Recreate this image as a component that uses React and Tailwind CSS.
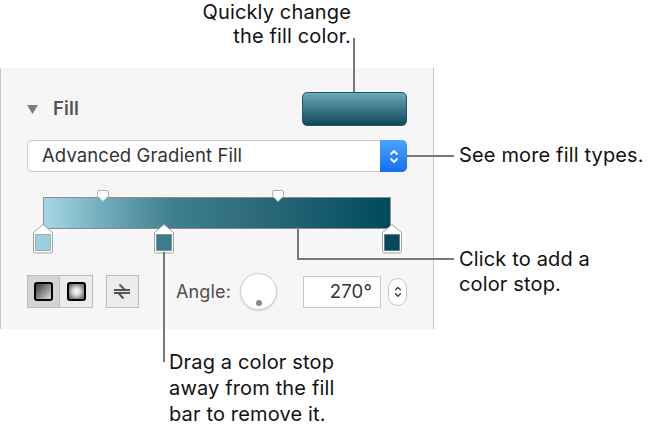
const font = { fontFamily: "Inter, 'Liberation Sans', sans-serif" };

const Stop = ({ color, left }) => (
  <svg
    width="20"
    height="30"
    viewBox="0 0 20 30"
    className="absolute top-[26px]"
    style={{ left }}
  >
    <path
      d="M10 0.5 L19.5 8.5 V27 a2 2 0 0 1 -2 2 H2.5 a2 2 0 0 1 -2 -2 V8.5 Z"
      fill="#fff"
      stroke="#a3a3a3"
    />
    <rect x="2.5" y="10.5" width="15" height="16" fill={color} stroke="rgba(0,0,0,0.25)" />
  </svg>
);

const Handle = ({ left }) => (
  <svg
    width="12"
    height="12"
    viewBox="0 0 12 12"
    className="absolute top-[-8px]"
    style={{ left }}
  >
    <path d="M2 0.5 H10 a1.5 1.5 0 0 1 1.5 1.5 V6 L6 11.5 L0.5 6 V2 a1.5 1.5 0 0 1 1.5 -1.5 Z" fill="#fff" stroke="#b0b0b0" />
  </svg>
);

const Chevrons = ({ color, size = 10 }) => (
  <svg width={size} height={size * 1.7} viewBox="0 0 10 17" fill="none" stroke={color} strokeWidth="1.8" strokeLinecap="round" strokeLinejoin="round">
    <path d="M2 6 L5 3 L8 6" />
    <path d="M2 11 L5 14 L8 11" />
  </svg>
);

const Panel = () => (
  <div className="w-[434px] h-[261px] bg-[#f6f6f6] border-l border-r border-[#c8c8c8] pt-[24px] pl-[26px] pr-[26px]">
    {/* Fill header */}
    <div className="flex items-center justify-between h-[34px]">
      <div className="flex items-center gap-[15px]">
        <svg width="11" height="9" viewBox="0 0 11 9">
          <path d="M0 0 H11 L5.5 9 Z" fill="#7d7d7d" />
        </svg>
        <span className="text-[18.5px] font-semibold text-[#555]">Fill</span>
      </div>
      <div className="w-[105px] h-[34px] rounded-[5px] border border-[#1f5869] bg-gradient-to-b from-[#6aa9ba] to-[#0b4a5d]" />
    </div>

    {/* Fill type dropdown */}
    <div className="mt-[14px] h-[32px] w-[380px] flex rounded-[5px] border border-[#cacaca] bg-white">
      <div className="flex-1 flex items-center pl-[14px] text-[18.5px] tracking-[0.1px] text-[#333]">
        Advanced Gradient Fill
      </div>
      <div className="w-[27px] -my-px -mr-px rounded-r-[5px] bg-gradient-to-b from-[#4aa2fd] to-[#1470f4] flex items-center justify-center">
        <Chevrons color="#fff" />
      </div>
    </div>

    {/* Gradient bar */}
    <div className="mt-[17px] h-[63px] pt-[8px] pl-[16px]">
      <div
        className="relative w-[348px] h-[32px] border border-[#8e8e8e]"
        style={{
          background:
            "linear-gradient(to right, #a6d8e5 0%, #7ab4c3 14%, #3f7f8e 37%, #2c6a7a 62%, #004a5d 100%)",
        }}
      >
        <Handle left="53px" />
        <Handle left="228px" />
        <Stop color="#9dd0df" left="-11px" />
        <Stop color="#3d7c8c" left="110px" />
        <Stop color="#064a5c" left="338px" />
      </div>
    </div>

    {/* Bottom controls */}
    <div className="mt-[23px] flex items-center h-[33px]">
      <div className="flex h-[33px] border border-[#bdbdbd]">
        <div className="w-[32px] bg-[#d4d4d4] border-r border-[#bdbdbd] flex items-center justify-center">
          <div className="w-[19px] h-[19px] rounded-[3px] border-2 border-black bg-gradient-to-br from-[#3a3a3a] to-[#e0e0e0]" />
        </div>
        <div className="w-[32px] bg-[#ececec] flex items-center justify-center">
          <div
            className="w-[19px] h-[19px] rounded-[3px] border-2 border-black"
            style={{ background: "radial-gradient(circle, #ffffff 0%, #d8d8d8 35%, #4a4a4a 100%)" }}
          />
        </div>
      </div>
      <div className="ml-[13px] w-[33px] h-[33px] border border-[#bdbdbd] bg-[#ececec] flex items-center justify-center">
        <svg width="18" height="17" viewBox="0 0 18 17" fill="none" stroke="#555" strokeWidth="2" strokeLinecap="butt">
          <path d="M1 7 H17" />
          <path d="M6.5 1.5 L12.5 7.5" />
          <path d="M1 10 H17" />
          <path d="M5 9.5 L10.5 15.5" />
        </svg>
      </div>
      <span className="ml-[37px] text-[18px] text-[#4f4f4f]">Angle:</span>
      <div className="ml-[9px] relative w-[37px] h-[37px] rounded-full bg-white border border-[#cfcfcf] shadow-[0_1px_2px_rgba(0,0,0,0.15)]">
        <div className="absolute left-[15px] top-[26px] w-[6px] h-[6px] rounded-full bg-[#8a8a8a]" />
      </div>
      <div className="ml-[26px] w-[78px] h-[32px] bg-white border border-[#c6c6c6] flex items-center justify-end pr-[8px] text-[18.5px] text-[#333]">
        270°
      </div>
      <div className="ml-[7px] w-[19px] h-[28px] rounded-full bg-white border border-[#c6c6c6] flex items-center justify-center">
        <Chevrons color="#444" size={8} />
      </div>
    </div>
  </div>
);

export default function App() {
  return (
    <div className="relative w-[662px] h-[430px] bg-white flex text-[20px] tracking-[0.15px] text-[#111]" style={font}>
      <div className="w-[434px] flex flex-col">
        <div className="h-[68px] pr-[83px] text-right leading-[24px]">
          Quickly change
          <br />
          the fill color.
        </div>
        <Panel />
        <div className="pl-[169px] pt-[20px] leading-[26px]">
          Drag a color stop
          <br />
          away from the fill
          <br />
          bar to remove it.
        </div>
      </div>
      <div className="flex-1 pl-[25px] leading-[25px]">
        <div className="mt-[143px]">See more fill types.</div>
        <div className="mt-[79px]">
          Click to add a
          <br />
          color stop.
        </div>
      </div>

      {/* Leader lines */}
      <div className="absolute left-[353px] top-[38px] w-[2px] h-[54px] bg-[#777]" />
      <div className="absolute left-[407px] top-[155px] w-[47px] h-[2px] bg-[#777]" />
      <div className="absolute left-[297px] top-[229px] w-[2px] h-[31px] bg-[#777]" />
      <div className="absolute left-[297px] top-[258px] w-[157px] h-[2px] bg-[#777]" />
      <div className="absolute left-[163px] top-[252px] w-[2px] h-[110px] bg-[#777]" />
    </div>
  );
}
